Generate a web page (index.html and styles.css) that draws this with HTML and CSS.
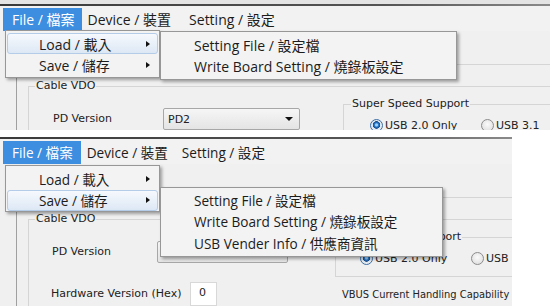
FILE: index.html
```html
<!DOCTYPE html>
<html lang="zh-Hant">
<head>
    <meta charset="UTF-8">
    <meta name="viewport" content="width=device-width, initial-scale=1.0">
    <title>File menu</title>
    <link rel="stylesheet" href="styles.css">
</head>
<body>

<!-- Shot 1: Load submenu -->
<div class="shot shot-a">
    <div class="titlebar"></div>
    <nav class="menubar">
        <span class="menu-item is-open">File / 檔案</span>
        <span class="menu-item">Device / 裝置</span>
        <span class="menu-item">Setting / 設定</span>
    </nav>
    <div class="panel">
        <fieldset class="group group-cable">
            <legend>Cable VDO</legend>
            <div class="cols">
                <div class="col-left">
                    <div class="row row-pd">
                        <span class="lbl">PD Version</span>
                        <span class="combo"><span>PD2</span><span class="combo-arrow"></span></span>
                    </div>
                    <div class="row row-hw">
                        <span class="lbl">Hardware Version (Hex)</span>
                        <span class="textbox">0</span>
                    </div>
                </div>
                <div class="col-right">
                    <fieldset class="group group-speed">
                        <legend>Super Speed Support</legend>
                        <div class="radios">
                            <span class="radio is-on">USB 2.0 Only</span>
                            <span class="radio">USB 3.1</span>
                        </div>
                    </fieldset>
                    <div class="lbl vbus">VBUS Current Handling Capability</div>
                </div>
            </div>
        </fieldset>
    </div>
    <ul class="menu menu-file">
        <li class="is-hot">Load / 載入<span class="sub-arrow"></span></li>
        <li>Save / 儲存<span class="sub-arrow"></span></li>
    </ul>
    <ul class="menu menu-sub">
        <li>Setting File / 設定檔</li>
        <li>Write Board Setting / 燒錄板設定</li>
    </ul>
</div>

<!-- Shot 2: Save submenu -->
<div class="shot shot-b">
    <div class="titlebar"></div>
    <nav class="menubar">
        <span class="menu-item is-open">File / 檔案</span>
        <span class="menu-item">Device / 裝置</span>
        <span class="menu-item">Setting / 設定</span>
    </nav>
    <div class="panel">
        <fieldset class="group group-cable">
            <legend>Cable VDO</legend>
            <div class="cols">
                <div class="col-left">
                    <div class="row row-pd">
                        <span class="lbl">PD Version</span>
                        <span class="combo"><span>PD2</span><span class="combo-arrow"></span></span>
                    </div>
                    <div class="row row-hw">
                        <span class="lbl">Hardware Version (Hex)</span>
                        <span class="textbox">0</span>
                    </div>
                </div>
                <div class="col-right">
                    <fieldset class="group group-speed">
                        <legend>Super Speed Support</legend>
                        <div class="radios">
                            <span class="radio is-on">USB 2.0 Only</span>
                            <span class="radio">USB 3.1</span>
                        </div>
                    </fieldset>
                    <div class="lbl vbus">VBUS Current Handling Capability</div>
                </div>
            </div>
        </fieldset>
    </div>
    <ul class="menu menu-file">
        <li>Load / 載入<span class="sub-arrow"></span></li>
        <li class="is-hot">Save / 儲存<span class="sub-arrow"></span></li>
    </ul>
    <ul class="menu menu-sub">
        <li>Setting File / 設定檔</li>
        <li>Write Board Setting / 燒錄板設定</li>
        <li>USB Vender Info / 供應商資訊</li>
    </ul>
</div>

</body>
</html>
```

FILE: styles.css
```css
/* -------- two stacked window crops -------- */
:root {
    --win-bg: #f0f0f0;
    --menu-bg: #f2f2f2;
    --hot-blue: #3d8ee0;
    --line: #d5d5d5;
    --text: #1c1c1c;
}
body {
    margin: 0;
    background: #fff;
    font-family: "Open Sans", "Noto Sans CJK TC", sans-serif;
    color: var(--text);
}
.shot {
    position: relative;
    overflow: hidden;
    background: var(--win-bg);
    --menu-fs: 14px;
    --mi-pr: 12px;
    --first-pr: 7px;
    --left-w: 314px;
    --pd-lbl: 110px;
    --pd-pad: 24px;
    --combo-w: 137px;
    --speed-pad: 26px;
}
.shot-a { width: 550px; height: 126px; border-top: 4px solid #e4e4e4; }
.shot-b {
    width: 512px; height: 169px; margin-top: 7px;
    --menu-fs: 13.6px;
    --mi-pr: 8px;
    --first-pr: 8px;
    --left-w: 306px;
    --pd-lbl: 105px;
    --pd-pad: 23px;
    --combo-w: 131px;
    --speed-pad: 24px;
}

.titlebar {
    height: 2px;
    background: linear-gradient(to right, #3a3a3a, #555 70%, #8a8a8a);
}
.menubar {
    display: flex;
    height: 23px;
    padding: 2px 0 0 3px;
    background: var(--menu-bg);
}
.menu-item {
    padding: 0 var(--mi-pr) 0 6px;
    line-height: 23px;
    font-size: var(--menu-fs);
    white-space: nowrap;
}
.menu-item.is-open {
    padding: 0 var(--first-pr) 0 9px;
    background: var(--hot-blue);
    color: #fff;
}

/* -------- form area -------- */
.panel {
    margin: 33px -20px 0 16px;
    border-top: 1px solid var(--line);
    border-left: 1px solid #a0a0a0;
}
.group {
    margin: 0;
    padding: 0;
    border: 1px solid var(--line);
    min-width: 0;
}
.group legend {
    padding: 0 1px;
    font: 11px/14px "DejaVu Sans", sans-serif;
    color: #222;
}
.group-cable { margin: 14px 0 0 11px; border-right: none; }
.group-cable > legend { margin-left: 6px; }
.cols { display: grid; grid-template-columns: var(--left-w) 1fr; }
.lbl { font: 11px/14px "DejaVu Sans", sans-serif; color: #222; white-space: nowrap; }

.row { display: flex; align-items: center; }
.row-pd { margin-top: 15px; padding-left: var(--pd-pad); height: 22px; }
.row-pd .lbl { width: var(--pd-lbl); }
.row-hw { margin-top: 19px; padding-left: 22px; height: 24px; }
.row-hw .lbl { width: 139px; }

.combo {
    box-sizing: border-box;
    width: var(--combo-w);
    height: 22px;
    display: flex;
    align-items: center;
    justify-content: space-between;
    padding: 0 6px 0 4px;
    border: 1px solid #a7a7a7;
    border-radius: 2px;
    background: linear-gradient(#f6f6f6, #e4e4e4);
    font: 11px "DejaVu Sans", sans-serif;
    color: #222;
}
.combo-arrow {
    width: 0; height: 0;
    border-left: 4px solid transparent;
    border-right: 4px solid transparent;
    border-top: 4px solid #111;
}
.textbox {
    box-sizing: border-box;
    width: 27px;
    height: 24px;
    padding: 3px 0 0 8px;
    border: 1px solid #d8d8d8;
    background: #fff;
    font: 11px "DejaVu Sans", sans-serif;
}

.group-speed { margin-top: 4px; border-right: none; }
.group-speed > legend { margin-left: 7px; }
.radios { display: flex; margin: 6px 0 0; padding: 0 0 10px var(--speed-pad); }
.radio {
    display: flex;
    align-items: center;
    gap: 2px;
    height: 16px;
    font: 11px "DejaVu Sans", sans-serif;
    color: #222;
    white-space: nowrap;
}
.radio:first-child { width: 111px; }
.radio::before {
    content: "";
    box-sizing: border-box;
    width: 13px; height: 13px;
    border-radius: 50%;
    border: 1px solid #8c8c8c;
    background: radial-gradient(circle at 50% 40%, #fbfbfb, #d9d9d9);
}
.radio.is-on::before {
    border-color: #3b6ea5;
    background: radial-gradient(circle at 50% 45%, #9fd2ff 0 1px, #2a7cd0 2px, #174a86 3.5px, #dfe6ee 4px, #f4f4f4);
}
.vbus {
    margin: 11px 0 0 7px;
    font-family: "DejaVu Sans Condensed", "DejaVu Sans", sans-serif;
}

/* -------- drop-down menus (overlay) -------- */
.menu {
    position: absolute;
    box-sizing: border-box;
    margin: 0;
    padding: 2px 1px 0;
    list-style: none;
    background: #f3f3f3;
    border: 1px solid #979797;
    box-shadow: 2px 2px 3px rgba(0,0,0,0.35);
    font-size: var(--menu-fs);
}
.menu li {
    display: flex;
    align-items: center;
    justify-content: space-between;
    height: 21px;
    padding: 0 7px 0 31px;
    border: 1px solid transparent;
    border-radius: 3px;
    white-space: nowrap;
    box-sizing: border-box;
}
.menu li.is-hot {
    background: linear-gradient(#f6f9fd, #dde8f5);
    border-color: #b4cce8;
}
.sub-arrow {
    width: 0; height: 0;
    border-top: 3.5px solid transparent;
    border-bottom: 3.5px solid transparent;
    border-left: 4px solid #111;
}
.shot-a .menu-file { left: 5px; top: 26px; width: 155px; height: 48px; }
.shot-a .menu-sub { left: 160px; top: 27px; width: 297px; height: 49px; }
.shot-b .menu-file { left: 5px; top: 28px; width: 155px; height: 47px; }
.shot-b .menu-sub { left: 160px; top: 50px; width: 283px; height: 70px; padding-top: 1px; }
.shot-b .menu li { height: 21.5px; }
```
